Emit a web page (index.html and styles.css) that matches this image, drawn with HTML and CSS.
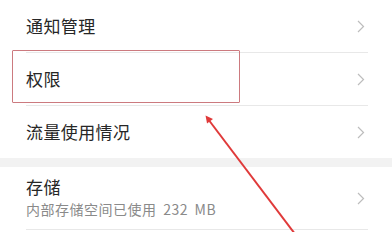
FILE: index.html
```html
<!DOCTYPE html>
<html lang="zh">
<head>
<meta charset="utf-8">
<link rel="stylesheet" href="styles.css">
</head>
<body>
<div class="screen">
  <div class="group">
    <div class="row"><div class="row-inner"><span class="title">通知管理</span><span class="chev"><svg width="8" height="13" viewBox="0 0 8 13"><path d="M1 1 L6.5 6.5 L1 12" fill="none" stroke="#bdbdbd" stroke-width="1.2"/></svg></span></div></div>
    <div class="row"><div class="row-inner"><span class="title">权限</span><span class="chev"><svg width="8" height="13" viewBox="0 0 8 13"><path d="M1 1 L6.5 6.5 L1 12" fill="none" stroke="#bdbdbd" stroke-width="1.2"/></svg></span></div></div>
    <div class="row"><div class="row-inner last"><span class="title">流量使用情况</span><span class="chev"><svg width="8" height="13" viewBox="0 0 8 13"><path d="M1 1 L6.5 6.5 L1 12" fill="none" stroke="#bdbdbd" stroke-width="1.2"/></svg></span></div></div>
  </div>
  <div class="band"></div>
  <div class="group">
    <div class="row"><div class="row-inner tall"><div class="texts"><span class="title">存储</span><span class="sub">内部存储空间已使用 232 MB</span></div><span class="chev"><svg width="8" height="13" viewBox="0 0 8 13"><path d="M1 1 L6.5 6.5 L1 12" fill="none" stroke="#bdbdbd" stroke-width="1.2"/></svg></span></div></div>
  </div>
  <div class="highlight"></div>
  <svg class="arrow" width="392" height="232" viewBox="0 0 392 232">
    <line x1="208" y1="119" x2="295" y2="234" stroke="#e03a3a" stroke-width="2"/>
    <path d="M205.5 115.5 L213 119 L207 123.5 Z" fill="#e03a3a"/>
  </svg>
</div>
</body>
</html>
```
FILE: styles.css
```css
html, body {
  margin: 0;
  padding: 0;
  background: #ffffff;
}
.screen {
  position: relative;
  width: 392px;
  height: 232px;
  overflow: hidden;
  font-family: "Noto Sans CJK SC", "Noto Sans", sans-serif;
  color: #262626;
}
.row {
  padding-left: 26px;
}
.row-inner {
  height: 52px;
  margin-right: 24px;
  padding-right: 3px;
  border-bottom: 1px solid #e8e8e8;
  display: flex;
  align-items: center;
  justify-content: space-between;
}
.row-inner.last {
  border-bottom: none;
}
.row-inner.tall {
  height: 62px;
}
.title {
  font-size: 17px;
  line-height: 20px;
  letter-spacing: 0.4px;
}
.texts {
  display: flex;
  flex-direction: column;
  gap: 2px;
}
.sub {
  font-size: 14px;
  line-height: 20px;
  color: #8a8a8a;
  letter-spacing: 0.5px;
  word-spacing: 3px;
}
.chev {
  display: flex;
  width: 8px;
  height: 13px;
}
.band {
  height: 9px;
  background: #f2f2f2;
}
.highlight {
  position: absolute;
  left: 12px;
  top: 50px;
  width: 226px;
  height: 51px;
  border: 1.5px solid #cc7a7f;
  border-radius: 1px;
}
.arrow {
  position: absolute;
  left: 0;
  top: 0;
}
```
